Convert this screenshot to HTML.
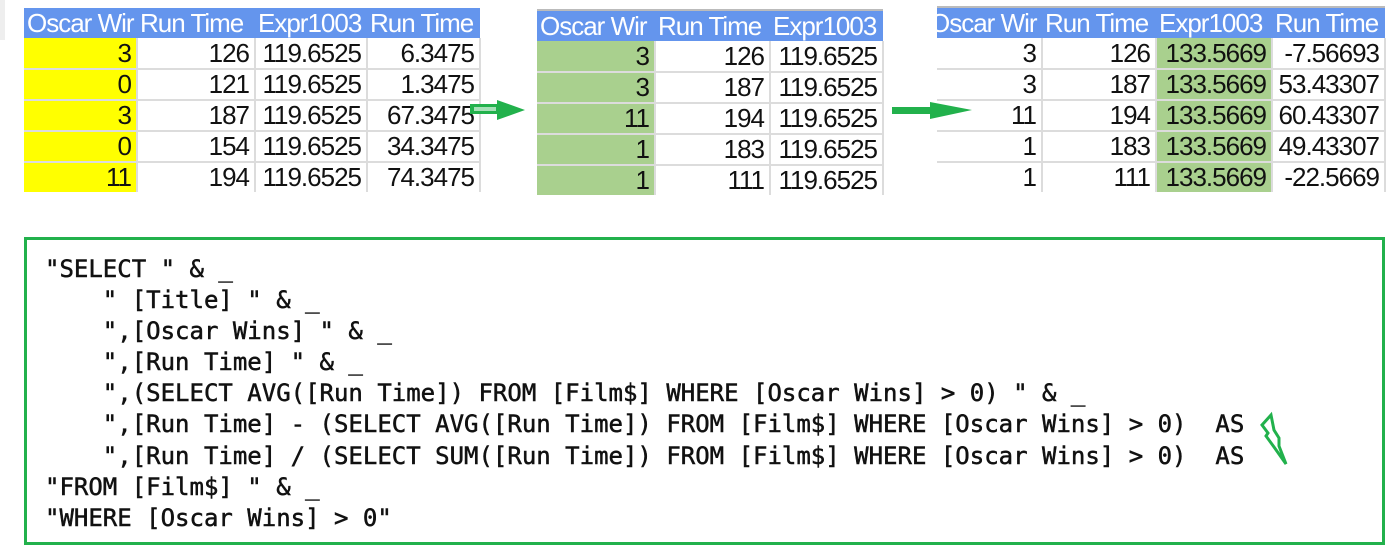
<!DOCTYPE html>
<html><head><meta charset="utf-8"><style>
body{margin:0;width:1392px;height:560px;background:#fff;position:relative;overflow:hidden;font-family:"Liberation Sans",Arial,sans-serif}
.t{position:absolute;border-collapse:collapse;table-layout:fixed}
.t td{height:31px;padding:0 5px 0 0;text-align:right;font-size:26px;letter-spacing:-1px;color:#111;border-bottom:2px solid #dcdcdc;border-right:2px solid #dcdcdc;white-space:nowrap;overflow:hidden;line-height:29px;box-sizing:border-box}
.t tr.h td{background:#6495ed;color:#fff;text-align:left;padding:0 0 0 3px;border:none;height:30px;font-size:26px;letter-spacing:-1px}
.y{background:#ffff00}
.g{background:#a9d08e}
pre{position:absolute;left:45px;top:254px;margin:0;font-family:"DejaVu Sans Mono","Liberation Mono",monospace;font-size:24px;line-height:31.1px;color:#111;-webkit-text-stroke:0.5px #111}
</style></head><body>
<div style="position:absolute;left:0;top:0;width:5px;height:40px;background:#eee"></div>
<table class="t" style="left:24px;top:8px;width:456px">
<colgroup><col style="width:113px"><col style="width:118px"><col style="width:112px"><col style="width:113px"></colgroup>
<tr class="h"><td>Oscar Wir</td><td>Run Time</td><td>Expr1003</td><td>Run Time</td></tr>
<tr><td class="y">3</td><td>126</td><td>119.6525</td><td>6.3475</td></tr>
<tr><td class="y">0</td><td>121</td><td>119.6525</td><td>1.3475</td></tr>
<tr><td class="y">3</td><td>187</td><td>119.6525</td><td>67.3475</td></tr>
<tr><td class="y">0</td><td>154</td><td>119.6525</td><td>34.3475</td></tr>
<tr><td class="y" style="height:27px;border-bottom:none">11</td><td style="height:27px;border-bottom:none">194</td><td style="height:27px;border-bottom:none">119.6525</td><td style="height:27px;border-bottom:none">74.3475</td></tr>
</table>
<div style="position:absolute;left:537px;top:9px;width:346px;height:2px;background:#bbb"></div>
<table class="t" style="left:537px;top:11px;width:346px">
<colgroup><col style="width:118px"><col style="width:115px"><col style="width:113px"></colgroup>
<tr class="h"><td>Oscar Wir</td><td>Run Time</td><td>Expr1003</td></tr>
<tr><td class="g">3</td><td>126</td><td>119.6525</td></tr>
<tr><td class="g">3</td><td>187</td><td>119.6525</td></tr>
<tr><td class="g">11</td><td>194</td><td>119.6525</td></tr>
<tr><td class="g">1</td><td>183</td><td>119.6525</td></tr>
<tr><td class="g" style="height:29px;border-bottom:none">1</td><td style="height:29px;border-bottom:none">111</td><td style="height:29px;border-bottom:none">119.6525</td></tr>
</table>
<div style="position:absolute;left:937px;top:6px;width:448px;height:2px;background:#bbb"></div>
<table class="t" style="left:937px;top:8px;width:448px">
<colgroup><col style="width:105px"><col style="width:114px"><col style="width:116px"><col style="width:113px"></colgroup>
<tr class="h"><td style="text-indent:-10px">Oscar Wir</td><td>Run Time</td><td>Expr1003</td><td>Run Time</td></tr>
<tr><td>3</td><td>126</td><td class="g">133.5669</td><td>-7.56693</td></tr>
<tr><td>3</td><td>187</td><td class="g">133.5669</td><td>53.43307</td></tr>
<tr><td>11</td><td>194</td><td class="g">133.5669</td><td>60.43307</td></tr>
<tr><td>1</td><td>183</td><td class="g">133.5669</td><td>49.43307</td></tr>
<tr><td style="height:27px;border-bottom:none">1</td><td style="height:27px;border-bottom:none">111</td><td class="g" style="height:27px;border-bottom:none">133.5669</td><td style="height:27px;border-bottom:none">-22.5669</td></tr>
</table>
<svg style="position:absolute;left:0;top:0" width="1392" height="560">
<polygon points="470,104 497,104 497,100 525,110 497,120 497,114 470,114" fill="#22b14c"/>
<rect x="474" y="107" width="22" height="4" fill="#fff" opacity="0.6"/>
<polygon points="892,107 930,107 930,102 972,110 930,119 930,114 892,114" fill="#22b14c"/>
<path d="M1271,415 L1262,425 L1268,433 L1266,436 L1274,447 L1286,464 L1279,446 L1279,438 L1274,430 L1271,415 Z" fill="none" stroke="#22b14c" stroke-width="3"/>
<rect x="25.5" y="238.5" width="1358" height="305" fill="none" stroke="#22b14c" stroke-width="3"/>
</svg>
<pre>"SELECT " &amp; _
    " [Title] " &amp; _
    ",[Oscar Wins] " &amp; _
    ",[Run Time] " &amp; _
    ",(SELECT AVG([Run Time]) FROM [Film$] WHERE [Oscar Wins] &gt; 0) " &amp; _
    ",[Run Time] - (SELECT AVG([Run Time]) FROM [Film$] WHERE [Oscar Wins] &gt; 0)  AS
    ",[Run Time] / (SELECT SUM([Run Time]) FROM [Film$] WHERE [Oscar Wins] &gt; 0)  AS
"FROM [Film$] " &amp; _
"WHERE [Oscar Wins] &gt; 0"</pre>
</body></html>
